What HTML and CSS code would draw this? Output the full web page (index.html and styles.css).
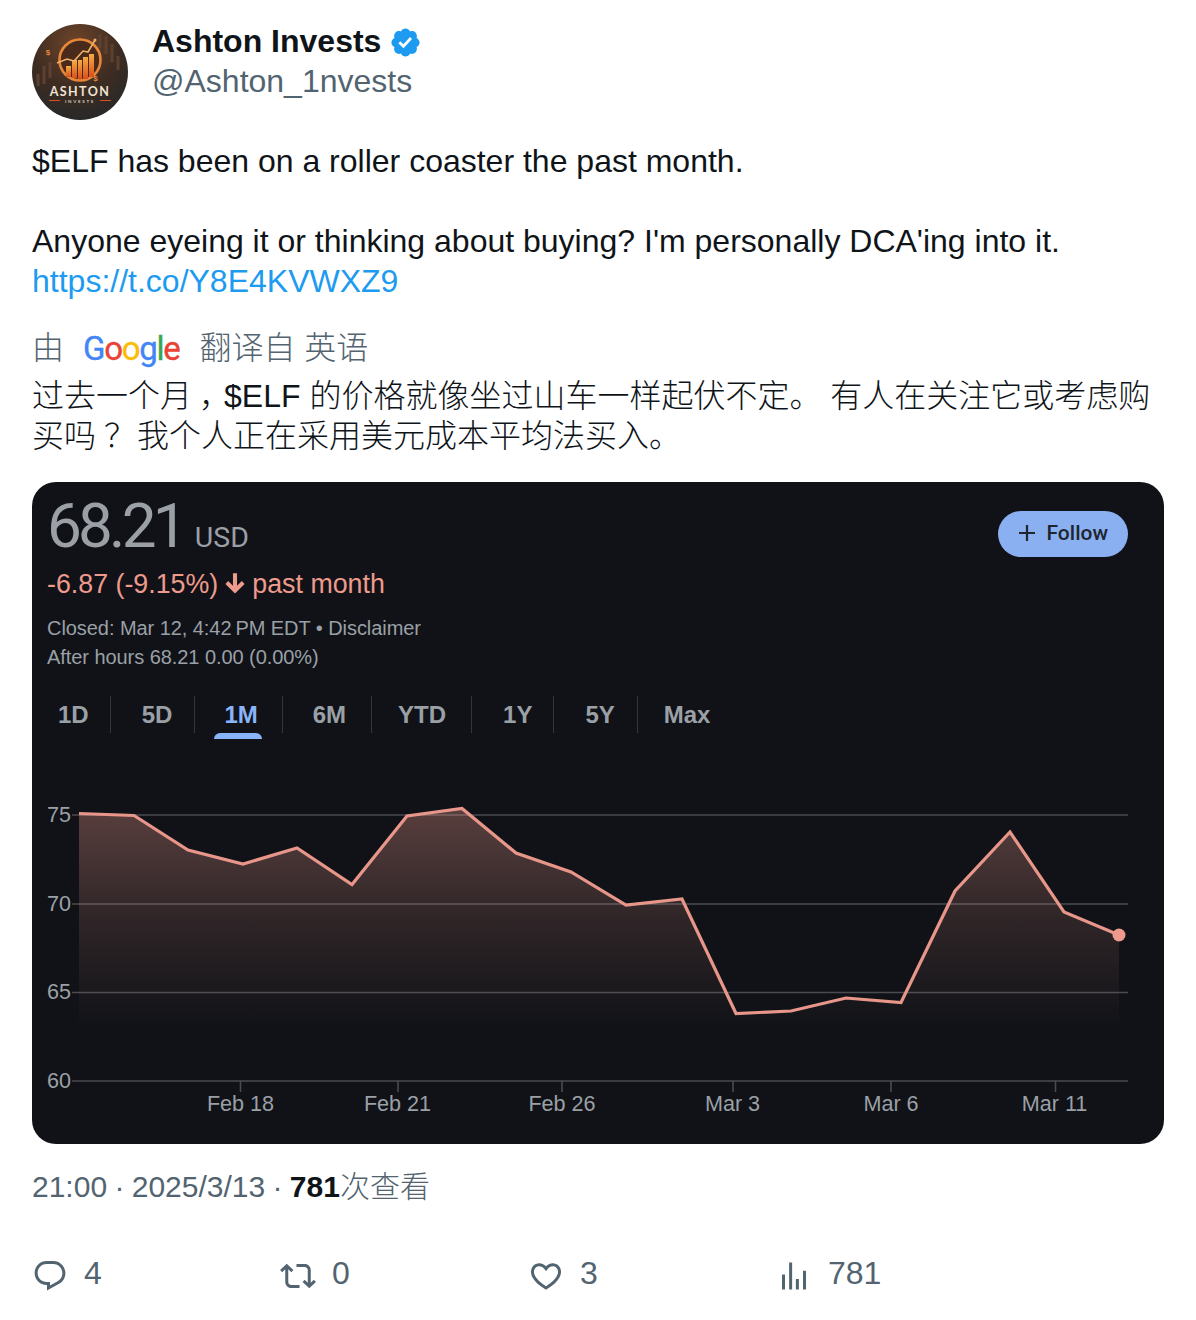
FILE: index.html
```html
<!DOCTYPE html>
<html lang="zh">
<head>
<meta charset="utf-8">
<title>Ashton Invests</title>
<link rel="stylesheet" href="styles.css">
</head>
<body>
<main class="tweet">
  <header class="author">
    <svg class="avatar" viewBox="0 0 96 96">
      <defs>
        <radialGradient id="avbg" cx="0.45" cy="0.2" r="0.85">
          <stop offset="0" stop-color="#6e4429"/>
          <stop offset="0.55" stop-color="#3d2c22"/>
          <stop offset="1" stop-color="#25282a"/>
        </radialGradient>
        <linearGradient id="avbar" x1="0" y1="0" x2="0" y2="1">
          <stop offset="0" stop-color="#f8ab40"/>
          <stop offset="1" stop-color="#d9501c"/>
        </linearGradient>
      </defs>
      <circle cx="48" cy="48" r="48" fill="url(#avbg)"/>
      <path d="M6 62v-12M12 60v-18M18 54v-16M68 24v-14M74 30v-18M80 38v-18M86 46v-14" stroke="#5d4030" stroke-width="3"/>
      <circle cx="48" cy="36" r="20.500" fill="#4a2a1a" stroke="#e8873a" stroke-width="2.600"/>
      <g fill="url(#avbar)">
        <rect x="34" y="42" width="5" height="11"/>
        <rect x="40" y="36" width="5" height="18"/>
        <rect x="46" y="36" width="4" height="19"/>
        <rect x="51" y="33" width="5" height="22"/>
        <rect x="57" y="30" width="5" height="23"/>
      </g>
      <path d="M25 39l10-4 7 2 9-10 5 1 7-12" fill="none" stroke="#f0b06a" stroke-width="1.600"/>
      <circle cx="63" cy="16" r="1.500" fill="#f0b06a"/>
      <text class="av-dollar" x="16" y="31">$</text>
      <text class="av-dollar" x="63.500" y="57">$</text>
      <text class="av-name" x="48" y="72">ASHTON</text>
      <path d="M17 76.500h11M68 76.500h11" stroke="#d9501c" stroke-width="1"/>
      <text class="av-sub" x="48" y="79">INVESTS</text>
    </svg>
    <div class="names">
      <div class="name-row">
        <span class="name">Ashton Invests</span>
        <svg class="badge" viewBox="0 0 24 24"><path fill="#1d9bf0" d="M22.25 12c0-1.43-.88-2.67-2.19-3.34.46-1.39.2-2.9-.81-3.91s-2.52-1.27-3.91-.81c-.66-1.31-1.91-2.19-3.34-2.19s-2.67.88-3.33 2.19c-1.4-.46-2.91-.2-3.92.81s-1.26 2.52-.8 3.91c-1.31.67-2.2 1.91-2.2 3.34s.89 2.67 2.2 3.34c-.46 1.39-.21 2.9.8 3.91s2.52 1.26 3.91.81c.67 1.31 1.91 2.19 3.34 2.19s2.68-.88 3.34-2.19c1.39.45 2.9.2 3.91-.81s1.27-2.52.81-3.91c1.31-.67 2.19-1.91 2.19-3.34zm-11.71 4.2L6.8 12.46l1.41-1.42 2.26 2.26 4.8-5.23 1.47 1.36-6.2 6.77z"/></svg>
      </div>
      <div class="handle">@Ashton_1nvests</div>
    </div>
  </header>

  <p class="body-text">$ELF has been on a roller coaster the past month.<br><br>Anyone eyeing it or thinking about buying? I'm personally DCA'ing into it.<br><a class="link" href="#">https://t.co/Y8E4KVWXZ9</a></p>

  <div class="translated-by">
    <span>由</span>
    <span class="google"><span class="g-blue">G</span><span class="g-red">o</span><span class="g-yellow">o</span><span class="g-blue">g</span><span class="g-green">l</span><span class="g-red">e</span></span>
    <span>翻译自 英语</span>
  </div>
  <p class="translation"><span class="translation-line">过去一个月<span class="shift-comma">，</span>$ELF 的价格就像坐过山车一样起伏不定。 有人在关注它或考虑购</span><span class="translation-line">买吗<span class="shift-question">？</span> 我个人正在采用美元成本平均法买入。</span></p>

  <section class="card">
    <div class="quote">
      <div class="quote-info">
        <div class="price-row"><span class="price">68.21</span><span class="currency">USD</span></div>
        <div class="change">-6.87 (-9.15%)
          <svg class="arrow" viewBox="0 0 20 20"><path d="M8.3 1h3.4v10.500l4-3.900 2.300 2.300L10 18 2 9.900l2.300-2.300 4 3.900z"/></svg>
          past month</div>
        <div class="meta-line meta-first">Closed: Mar 12, 4:42&#8201;PM EDT • Disclaimer</div>
        <div class="meta-line">After hours 68.21 0.00 (0.00%)</div>
      </div>
      <button class="follow">
        <svg class="plus" viewBox="0 0 18 18"><path d="M9 1v16M1 9h16"/></svg>
        Follow
      </button>
    </div>
    <nav class="tabs">
      <span class="tab tab-first">1D</span>
      <span class="tab">5D</span>
      <span class="tab tab-active">1M</span>
      <span class="tab tab-6m">6M</span>
      <span class="tab tab-ytd">YTD</span>
      <span class="tab tab-1y">1Y</span>
      <span class="tab">5Y</span>
      <span class="tab tab-last">Max</span>
    </nav>
    <svg class="chart" viewBox="32 739 1132 405">
      <defs>
        <linearGradient id="area" gradientUnits="userSpaceOnUse" x1="0" y1="808" x2="0" y2="1030">
          <stop offset="0" stop-color="#ee9a8c" stop-opacity="0.33"/>
          <stop offset="0.5" stop-color="#ee9a8c" stop-opacity="0.14"/>
          <stop offset="1" stop-color="#ee9a8c" stop-opacity="0"/>
        </linearGradient>
      </defs>
      <g class="grid">
        <path d="M72 815H1128M72 904H1128M72 992.500H1128M72 1081H1128"/>
        <path d="M240.500 1081v11M398 1081v11M562 1081v11M733 1081v11M891 1081v11M1055.500 1081v11"/>
      </g>
      <path fill="url(#area)" d="M79 813.500L134 815.500 188 850 243 864 297 848 352 884.500 407 816 462 808.500 516 853 571 872 626 905 682 899 736 1013.500 791 1011 846 998 901 1002.500 955 891 1010 832 1064 912 1119 935V1030H79Z"/>
      <polyline class="line" points="79,813.500 134,815.500 188,850 243,864 297,848 352,884.500 407,816 462,808.500 516,853 571,872 626,905 682,899 736,1013.500 791,1011 846,998 901,1002.500 955,891 1010,832 1064,912 1119,935"/>
      <circle class="dot" cx="1119" cy="935" r="6.500"/>
      <g class="y-labels">
        <text x="71" y="822">75</text>
        <text x="71" y="911">70</text>
        <text x="71" y="999">65</text>
        <text x="71" y="1088">60</text>
      </g>
      <g class="x-labels">
        <text x="240.500" y="1111">Feb 18</text>
        <text x="397.500" y="1111">Feb 21</text>
        <text x="562" y="1111">Feb 26</text>
        <text x="732.500" y="1111">Mar 3</text>
        <text x="891" y="1111">Mar 6</text>
        <text x="1054.500" y="1111">Mar 11</text>
      </g>
    </svg>
  </section>

  <div class="timestamp">21:00 · 2025/3/13 · <strong class="views">781</strong>次查看</div>

  <footer class="actions">
    <div class="action">
      <svg class="icon" viewBox="0 0 24 24"><path d="M1.751 10c0-4.420 3.584-8 8.005-8h4.366c4.490 0 8.129 3.640 8.129 8.130 0 2.960-1.607 5.680-4.196 7.110l-8.054 4.460v-3.690h-.067c-4.490.1-8.183-3.510-8.183-8.010zm8.005-6c-3.317 0-6.005 2.690-6.005 6 0 3.370 2.770 6.080 6.138 6.010l.351-.01h1.761v2.300l5.087-2.810c1.951-1.080 3.163-3.130 3.163-5.360 0-3.390-2.744-6.130-6.129-6.130H9.756z"/></svg>
      <span>4</span>
    </div>
    <div class="action">
      <svg class="icon" viewBox="0 0 24 24"><path d="M4.500 3.880l4.432 4.140-1.364 1.460L5.500 7.550V16c0 1.100.896 2 2 2H13v2H7.500c-2.209 0-4-1.790-4-4V7.550L1.432 9.480.068 8.020 4.500 3.880zM16.500 6H11V4h5.500c2.209 0 4 1.790 4 4v8.450l2.068-1.930 1.364 1.460-4.432 4.140-4.432-4.140 1.364-1.460 2.068 1.930V8c0-1.100-.896-2-2-2z"/></svg>
      <span>0</span>
    </div>
    <div class="action">
      <svg class="icon" viewBox="0 0 24 24"><path d="M16.697 5.500c-1.222-.06-2.679.51-3.890 2.160l-.805 1.090-.806-1.090C9.984 6.010 8.526 5.440 7.304 5.500c-1.243.07-2.349.78-2.910 1.910-.552 1.120-.633 2.780.479 4.820 1.074 1.970 3.257 4.270 7.129 6.610 3.870-2.340 6.052-4.640 7.126-6.610 1.111-2.040 1.030-3.700.477-4.820-.561-1.130-1.666-1.840-2.908-1.910zm4.187 7.690c-1.351 2.480-4.001 5.120-8.379 7.670l-.503.3-.504-.3c-4.379-2.550-7.029-5.190-8.382-7.670-1.360-2.500-1.410-4.860-.514-6.670.887-1.790 2.647-2.910 4.601-3.010 1.651-.09 3.368.56 4.798 2.010 1.429-1.450 3.146-2.100 4.796-2.010 1.954.1 3.714 1.220 4.601 3.010.896 1.810.846 4.170-.514 6.670z"/></svg>
      <span>3</span>
    </div>
    <div class="action">
      <svg class="icon" viewBox="0 0 24 24"><path d="M8.750 21V3h2v18h-2zM18 21V8.500h2V21h-2zM4 21l.004-10h2L6 21H4zm9.248 0v-7h2v7h-2z"/></svg>
      <span>781</span>
    </div>
  </footer>
</main>
</body>
</html>
```

FILE: styles.css
```css
* { box-sizing: border-box; }

html, body { margin: 0; background: #fff; }

body {
  font-family: "Liberation Sans", "Noto Sans CJK SC", sans-serif;
  color: #0f1419;
}

.tweet {
  width: 1196px;
  padding: 24px 32px 0;
}

.author {
  display: flex;
  gap: 24px;
}

.avatar {
  width: 96px;
  height: 96px;
  flex: none;
}

.av-name {
  font: 700 12.500px "Lato", "Liberation Sans", sans-serif;
  letter-spacing: 1.400px;
  fill: #efe3d3;
  text-anchor: middle;
}

.av-sub {
  font: 700 4.500px "Lato", "Liberation Sans", sans-serif;
  letter-spacing: 1.700px;
  fill: #d8c8b4;
  text-anchor: middle;
}

.av-dollar {
  font: 700 8px "Liberation Sans", sans-serif;
  fill: #e8873a;
  text-anchor: middle;
}

.names {
  margin-top: -3px;
}

.name-row {
  display: flex;
  align-items: center;
  gap: 8px;
  height: 40px;
}

.name {
  font-size: 32px;
  font-weight: 700;
  line-height: 40px;
}

.badge {
  width: 33px;
  height: 33px;
  margin-top: 2px;
}

.handle {
  font-size: 32px;
  line-height: 40px;
  color: #536471;
}

.body-text {
  margin: 21px 0 0;
  font-size: 32px;
  line-height: 40px;
}

.link {
  color: #1d9bf0;
  text-decoration: none;
}

.translated-by {
  display: flex;
  align-items: center;
  gap: 20px;
  height: 40px;
  margin-top: 27px;
  font-size: 32px;
  font-weight: 300;
  line-height: 40px;
  color: #536471;
}

.google {
  font-family: "Roboto", "Liberation Sans", sans-serif;
  font-size: 33px;
  font-weight: 400;
  letter-spacing: -1.300px;
  line-height: 40px;
  margin: 1px 0 0 -1px;
  -webkit-text-stroke: 0.35px currentColor;
}

.g-blue { color: #4285f4; }
.g-red { color: #ea4335; }
.g-yellow { color: #fbbc05; }
.g-green { color: #34a853; }

.translation {
  margin: 8px 0 0;
  font-size: 32px;
  font-weight: 300;
  line-height: 40px;
}

.translation-line {
  display: block;
  white-space: nowrap;
}

.shift-comma {
  padding-left: 7px;
  letter-spacing: -7px;
}

.shift-question {
  padding-left: 8px;
  letter-spacing: -8px;
}

.card {
  height: 662px;
  margin-top: 26px;
  border-radius: 24px;
  background: #101217;
  overflow: hidden;
  display: flex;
  flex-direction: column;
}

.quote {
  display: flex;
  justify-content: space-between;
  align-items: flex-start;
  padding: 0 36px 0 15px;
}

.price-row {
  display: flex;
  align-items: baseline;
  gap: 11px;
  height: 74px;
  padding-top: 11px;
  color: #9aa0a6;
}

.price {
  font-family: "Roboto", sans-serif;
  font-size: 62px;
  font-weight: 400;
  letter-spacing: -3.800px;
  line-height: 65px;
}

.currency {
  font-family: "Roboto", sans-serif;
  font-size: 28.500px;
}

.change {
  display: flex;
  align-items: center;
  gap: 5px;
  height: 36px;
  margin-top: 10px;
  font-size: 26.800px;
  color: #ee9a8c;
}

.arrow {
  width: 24px;
  height: 24px;
  fill: #ee9a8c;
}

.meta-line {
  font-size: 20px;
  line-height: 29px;
  letter-spacing: -0.060px;
  color: #9aa0a6;
}

.meta-first {
  margin-top: 12px;
}

.follow {
  display: flex;
  align-items: center;
  gap: 11px;
  height: 46px;
  margin-top: 29px;
  padding: 0 20px 2px;
  border: 0;
  border-radius: 23px;
  background: #8ab0f2;
  color: #20262f;
  font-family: "Roboto", sans-serif;
  font-size: 21px;
  font-weight: 500;
}

.plus {
  width: 18px;
  height: 18px;
  fill: none;
  stroke: #20262f;
  stroke-width: 2.200;
}

.tabs {
  display: flex;
  margin-top: 24px;
  height: 44px;
  padding-left: 15px;
}

.tab {
  position: relative;
  height: 37px;
  padding: 0 22px 0 31px;
  border-right: 1px solid #33363b;
  font-size: 24px;
  font-weight: 700;
  line-height: 38px;
  color: #9aa0a6;
}

.tab-first { padding: 0 21px 0 11px; }
.tab-active { padding: 0 24px 0 29px; color: #8ab4f8; }
.tab-6m { padding: 0 25px 0 30px; }
.tab-ytd { padding: 0 25px 0 26px; }
.tab-1y { padding-right: 21px; }
.tab-last { border-right: 0; padding-left: 26px; }

.tab-active::after {
  content: "";
  position: absolute;
  left: 19px;
  right: 20px;
  bottom: -6px;
  height: 6px;
  border-radius: 6px 6px 0 0;
  background: #8ab4f8;
}

.chart {
  display: block;
  width: 1132px;
  height: 405px;
  flex: none;
  margin-top: -1px;
}

.grid path {
  fill: none;
  stroke: #4a4b50;
  stroke-width: 1.600;
}

.line {
  fill: none;
  stroke: #e8968a;
  stroke-width: 3.200;
}

.dot { fill: #ee9a8c; }

.y-labels text,
.x-labels text {
  font-family: "Liberation Sans", sans-serif;
  font-size: 21.600px;
  fill: #9aa0a6;
}

.y-labels text { text-anchor: end; }
.x-labels text { text-anchor: middle; }

.timestamp {
  height: 40px;
  margin-top: 23px;
  font-size: 30px;
  font-weight: 300;
  line-height: 40px;
  word-spacing: -1px;
  color: #536471;
}

.views {
  color: #0f1419;
  font-weight: 700;
}

.actions {
  display: grid;
  grid-template-columns: repeat(4, 248px);
  margin-top: 46px;
}

.action {
  display: flex;
  align-items: center;
  gap: 16px;
  height: 40px;
  font-size: 32px;
  line-height: 40px;
  color: #536471;
}

.icon {
  width: 36px;
  height: 36px;
  margin-top: 6px;
  fill: #536471;
}
```
